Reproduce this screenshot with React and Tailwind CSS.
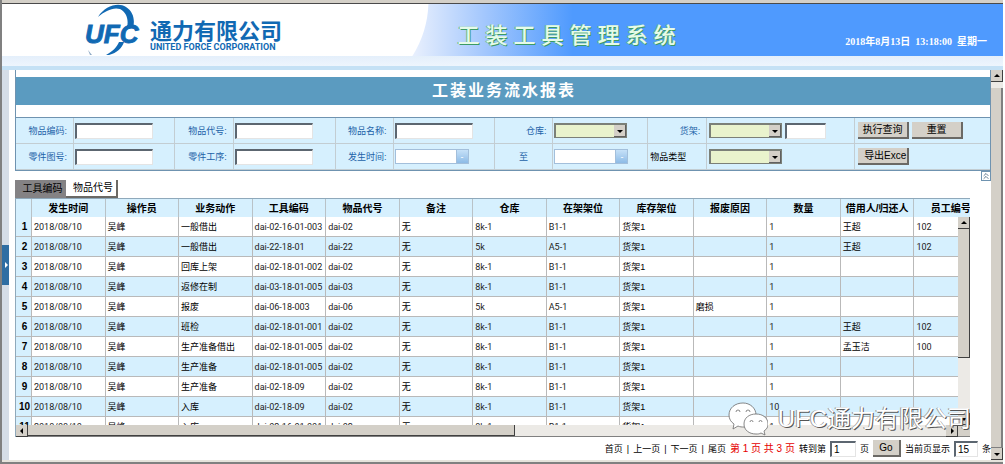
import { ChevronsUp } from 'lucide-react';
import clsx from 'clsx';

const columns = [
  '发生时间', '操作员', '业务动作', '工具编码', '物品代号', '备注', '仓库',
  '在架架位', '库存架位', '报废原因', '数量', '借用人/归还人', '员工编号',
];

const rows = [
  ['2018/08/10', '吴峰', '一般借出', 'dai-02-16-01-003', 'dai-02', '无', '8k-1', 'B1-1', '货架1', '', '1', '王超', '102'],
  ['2018/08/10', '吴峰', '一般借出', 'dai-22-18-01', 'dai-22', '无', '5k', 'A5-1', '货架1', '', '1', '王超', '102'],
  ['2018/08/10', '吴峰', '回库上架', 'dai-02-18-01-002', 'dai-02', '无', '8k-1', 'B1-1', '货架1', '', '1', '', ''],
  ['2018/08/10', '吴峰', '返修在制', 'dai-03-18-01-005', 'dai-03', '无', '8k-1', 'B1-1', '货架1', '', '1', '', ''],
  ['2018/08/10', '吴峰', '报废', 'dai-06-18-003', 'dai-06', '无', '5k', 'A5-1', '货架1', '磨损', '1', '', ''],
  ['2018/08/10', '吴峰', '班检', 'dai-02-18-01-001', 'dai-02', '无', '8k-1', 'B1-1', '货架1', '', '1', '王超', '102'],
  ['2018/08/10', '吴峰', '生产准备借出', 'dai-02-18-01-005', 'dai-02', '无', '8k-1', 'B1-1', '货架1', '', '1', '孟玉洁', '100'],
  ['2018/08/10', '吴峰', '生产准备', 'dai-02-18-01-005', 'dai-02', '无', '8k-1', 'B1-1', '货架1', '', '1', '', ''],
  ['2018/08/10', '吴峰', '生产准备', 'dai-02-18-09', 'dai-02', '无', '8k-1', 'B1-1', '货架1', '', '1', '', ''],
  ['2018/08/10', '吴峰', '入库', 'dai-02-18-09', 'dai-02', '无', '8k-1', 'B1-1', '货架1', '', '10', '', ''],
  ['2018/08/10', '吴峰', '入库', 'dai-02-16-01-001', 'dai-02', '无', '8k-1', 'B1-1', '货架1', '', '1', '', ''],
];

// columns whose values are Chinese words
const wordColumns = [1, 2, 5, 8, 9, 11];

const arrows = {
  up: '2,6 5,3 8,6',
  down: '2,4 5,7 8,4',
  left: '6,2 3,5 6,8',
  right: '4,2 7,5 4,8',
};

const Arrow = ({ dir, className = 'fill-black' }) => (
  <svg viewBox="0 0 10 10" className={clsx('h-2.5 w-2.5 shrink-0', className)} aria-hidden="true">
    <polygon points={arrows[dir]} />
  </svg>
);

const ScrollButton = ({ dir, label }) => (
  <button
    type="button"
    aria-label={label}
    className="flex h-3 w-3 shrink-0 items-center justify-center border-r border-b border-[#404040] bg-[#d4d0c8]"
  >
    <Arrow dir={dir} />
  </button>
);

const Logo = () => (
  <div className="flex items-start gap-1.5">
    <svg viewBox="0 0 60 52" className="h-[52px] w-[60px] fill-[#1169b3]" role="img" aria-label="UFC">
      <path d="M14 13 C21 2 34 -2 42 3 C50 8 51 17 49 24 L43 23 C45 15 42 8 36 5 C29 3 21 7 14 13 Z" />
      <path d="M40 38 C38 44 33 49 25 51 L22 51 C29 47 33 43 35 38 Z" />
      <path d="M4 46 L8 51 L6 51 Z" className="fill-[#8fa9c4]" />
      <text
        x="1"
        y="39"
        fontSize="26"
        stroke="#1169b3"
        strokeWidth="0.9"
        className="font-['Liberation_Sans',sans-serif] font-bold italic"
      >
        UFC
      </text>
    </svg>
    <div className="pt-[18px] text-[#1169b3]">
      <div className="text-[22px] leading-5 font-bold">通力有限公司</div>
      <div className="font-[Roboto,sans-serif] text-[9px] leading-2.5 font-bold whitespace-nowrap">UNITED FORCE CORPORATION</div>
    </div>
  </div>
);

const Header = () => (
  <header className="shrink-0">
    <div className="relative flex h-[52px] overflow-hidden bg-white">
      <svg viewBox="0 0 1000 52" preserveAspectRatio="none" className="absolute inset-0 h-full w-full" aria-hidden="true">
        <defs>
          <linearGradient id="sky" gradientUnits="userSpaceOnUse" x1="410" y1="0" x2="570" y2="0">
            <stop offset="0" stopColor="#e9f0fd" />
            <stop offset="0.45" stopColor="#a3c7fd" />
            <stop offset="1" stopColor="#4f9afe" />
          </linearGradient>
        </defs>
        <path d="M426 0 Q425 28 410 52 L1000 52 L1000 0 Z" fill="url(#sky)" />
      </svg>
      <div className="relative flex flex-[6] justify-start pl-[82px]">
        <Logo />
      </div>
      <h1 className="relative flex items-center gap-1.5 pt-3 font-['Liberation_Serif','Noto_Sans_CJK_SC',serif] text-[22px] leading-6 font-medium text-[#e6fbe9] [text-shadow:1px_1px_0_#3b9a66,-1px_0_0_#6db98c]">
        {[...'工装工具管理系统'].map((char, i) => (
          <span key={i}>{char}</span>
        ))}
      </h1>
      <div className="relative flex flex-[5] items-end justify-end pr-4 pb-1.5">
        <time className="font-['Liberation_Serif','Noto_Sans_CJK_SC',serif] text-[10px] leading-4 font-bold whitespace-pre text-white">
          2018年8月13日  13:18:00  星期一
        </time>
      </div>
    </div>
    <div className="h-2.5 bg-gradient-to-b from-[#e4effb] to-[#eef5fd]"></div>
    <div className="h-1 bg-[#c5e1f5]"></div>
  </header>
);

const Cell = ({ children, className }) => (
  <div className={clsx('flex h-[26px] items-center border-r border-b border-[#c3cdd2]', className)}>{children}</div>
);

const Label = ({ htmlFor, children, className = 'justify-end pr-1.5 text-[#1c62a8]' }) => (
  <Cell className={className}>
    <label htmlFor={htmlFor} className="whitespace-nowrap">{children}</label>
  </Cell>
);

const inputStyle = 'h-4 border-t-2 border-l-2 border-t-[#5c6670] border-l-[#5c6670] border-r border-b border-r-[#e4e4e4] border-b-[#e4e4e4] bg-white px-0.5 outline-none';

const TextField = ({ id, label }) => (
  <>
    <Label htmlFor={id}>{label}</Label>
    <Cell className="pl-px">
      <input id={id} type="text" className={clsx(inputStyle, 'w-[78px]')} />
    </Cell>
  </>
);

const Dropdown = ({ id }) => (
  <div className="relative">
    <select
      id={id}
      className="block h-[15px] w-[73px] appearance-none border-t-2 border-l-2 border-r border-b border-[#7b8078] bg-[#e9f3cd] outline-none"
    >
      <option value=""></option>
    </select>
    <span className="pointer-events-none absolute top-0.5 right-px flex h-3 w-3 items-center justify-center border-r border-b border-[#606060] bg-[#d4d0c8]">
      <Arrow dir="down" />
    </span>
  </div>
);

const DateField = ({ id, label }) => (
  <div className="flex h-[15px] border border-[#a3bfdb]">
    <input id={id} type="text" className="w-[60px] bg-white px-0.5 outline-none" />
    <button
      type="button"
      aria-label={label}
      className="flex w-3 items-center justify-center border-l border-[#a3bfdb] bg-gradient-to-b from-[#c6e1f8] to-[#8dbbe6] leading-3 text-white"
    >
      -
    </button>
  </div>
);

const GreyButton = ({ children, className }) => (
  <button
    type="button"
    className={clsx('h-[17px] overflow-hidden border-r-2 border-b-2 border-[#6b6965] bg-[#d4d0c8] text-[10px] leading-4 whitespace-nowrap text-black', className)}
  >
    {children}
  </button>
);

const SearchForm = () => (
  <form className="grid grid-cols-[58fr_101fr_59fr_102fr_58fr_101fr_59fr_95fr_59fr_148fr_135fr] border-y border-[#6f93b0] bg-[#d6f0fe]">
    <TextField id="item-code" label="物品编码:" />
    <TextField id="item-no" label="物品代号:" />
    <TextField id="item-name" label="物品名称:" />
    <Label htmlFor="warehouse">仓库:</Label>
    <Cell className="pl-px"><Dropdown id="warehouse" /></Cell>
    <Label htmlFor="shelf">货架:</Label>
    <Cell className="gap-[3px] pl-0.5">
      <Dropdown id="shelf" />
      <input type="text" aria-label="货架" className={clsx(inputStyle, 'w-[41px]')} />
    </Cell>
    <Cell className="gap-[3px] border-r-0 pl-[3px]">
      <GreyButton className="w-[51px]">执行查询</GreyButton>
      <GreyButton className="w-[51px]">重置</GreyButton>
    </Cell>

    <TextField id="part-no" label="零件图号:" />
    <TextField id="part-step" label="零件工序:" />
    <Label htmlFor="date-from">发生时间:</Label>
    <Cell className="pl-px"><DateField id="date-from" label="开始日期" /></Cell>
    <Label htmlFor="date-to" className="justify-center text-[#1c62a8]">至</Label>
    <Cell className="pl-px"><DateField id="date-to" label="结束日期" /></Cell>
    <Label htmlFor="item-type" className="pl-0.5 text-black">物品类型</Label>
    <Cell className="pl-0.5"><Dropdown id="item-type" /></Cell>
    <Cell className="border-r-0 pl-[3px]">
      <GreyButton className="w-[51px] pl-1.5 text-left">导出Exce</GreyButton>
    </Cell>
  </form>
);

const RecordTable = () => (
  <div className="flex min-h-0 flex-1 flex-col border-t border-l border-[#8fa9bb]">
    <div className="relative min-h-0 flex-1 overflow-hidden">
      <table className="w-full min-w-[972px] table-fixed border-separate border-spacing-0">
        <thead>
          <tr className="h-[18px] bg-[#d6f0fe] text-[10px] leading-4">
            <th className="w-4 border-r border-[#b9c2c7]"></th>
            {columns.map((name) => (
              <th key={name} className="border-r border-[#b9c2c7] p-0 pt-0.5 whitespace-nowrap">{name}</th>
            ))}
          </tr>
        </thead>
        <tbody>
          {rows.map((row, i) => (
            <tr key={i} className={clsx('h-5', i % 2 ? 'bg-[#d6f0fe]' : 'bg-white')}>
              <th className="border-r border-b border-[#b9b9b9] bg-[#d6f0fe] p-0 pl-0.5 text-center font-['Liberation_Sans',sans-serif] text-[10px] leading-4">
                {i + 1}
              </th>
              {row.map((value, j) => (
                <td
                  key={j}
                  className={clsx(
                    'border-r border-b border-[#b9b9b9] p-0 pl-0.5 text-[9px] leading-4 whitespace-nowrap',
                    wordColumns.includes(j) ? 'text-black' : 'font-[Roboto,sans-serif] text-[#222222]'
                  )}
                >
                  {value}
                </td>
              ))}
            </tr>
          ))}
        </tbody>
      </table>

      {/* vertical scrollbar, sits over the last column */}
      <div className="absolute top-[18px] right-0 bottom-0 flex w-3 flex-col bg-[#eceae6]">
        <ScrollButton dir="up" label="向上滚动" />
        <div className="h-[62%] border-r border-b border-[#404040] bg-[#d4d0c8]"></div>
        <div className="flex-1"></div>
        <ScrollButton dir="down" label="向下滚动" />
      </div>
    </div>
    <div className="flex h-3 shrink-0 border-b border-[#808080] bg-[#eceae6]">
      <ScrollButton dir="left" label="向左滚动" />
      <div className="w-[51%] border-r border-b border-[#404040] bg-[#d4d0c8]"></div>
      <div className="flex-1"></div>
      <ScrollButton dir="right" label="向右滚动" />
      <div className="w-3 bg-[#d4d0c8]"></div>
    </div>
  </div>
);

const Pagination = () => (
  <nav className="flex h-[23px] shrink-0 items-center justify-end gap-1 text-[9px] whitespace-nowrap text-black">
    <a href="#first">首页</a>|
    <a href="#prev">上一页</a>|
    <a href="#next">下一页</a>|
    <a href="#last">尾页</a>
    <span className="text-[10px] text-[#e60000]">第 1 页 共 3 页</span>
    <label htmlFor="page-no">转到第</label>
    <input id="page-no" type="text" defaultValue="1" className={clsx(inputStyle, 'w-[26px] text-[10px]')} />
    页
    <GreyButton className="w-7">Go</GreyButton>
    <label htmlFor="page-size">当前页显示</label>
    <input id="page-size" type="text" defaultValue="15" className={clsx(inputStyle, 'w-6 text-[10px]')} />
    条
  </nav>
);

const Watermark = () => (
  <div className="pointer-events-none absolute right-5 bottom-6 flex items-center gap-2.5">
    <svg viewBox="0 0 40 34" className="h-[34px] w-10" fill="#ffffff" stroke="#6b6b6b" strokeWidth="0.8" aria-hidden="true">
      <path d="M15 1 C7 1 1 6 1 13 C1 17 3 20 6 22 L5 27 L10 24 C12 25 14 25 16 25 C23 25 28 20 28 13 C28 6 22 1 15 1 Z" />
      <path d="M28 12 C21 12 16 16 16 22 C16 28 21 32 28 32 C30 32 31 32 33 31 L37 33 L36 29 C39 27 40 25 40 22 C40 16 35 12 28 12 Z" />
      <path d="M8 10 a2 2 0 0 1 4 0 M18 10 a2 2 0 0 1 4 0 M22 20 a1.500 1.500 0 0 1 3 0 M31 20 a1.500 1.500 0 0 1 3 0" fill="none" />
    </svg>
    <span className="text-2xl leading-7 font-normal whitespace-nowrap text-white [text-shadow:1px_1px_0_#555555,-1px_0_0_#999999]">
      UFC通力有限公司
    </span>
  </div>
);

const App = () => {
  return (
    <div className="flex h-screen min-h-[464px] flex-col overflow-hidden border-l-2 border-[#808080] bg-white pr-0.5 font-['Liberation_Sans','Noto_Sans_CJK_SC',sans-serif] text-[9px] leading-3 text-black">
      <div className="h-[3px] shrink-0 bg-[#d4d0c8]"></div>
      <div className="h-px shrink-0 bg-[#4a4a4a]"></div>
      <Header />

      <div className="flex min-h-0 flex-1">
        <aside className="flex w-[7px] shrink-0 flex-col justify-center bg-[#d5dde7]">
          <button type="button" aria-label="展开菜单" className="flex h-10 items-center justify-center bg-[#2f6ea3]">
            <Arrow dir="right" className="fill-white" />
          </button>
        </aside>

        <main className="relative ml-1.5 flex min-w-0 flex-1 flex-col">
          <section className="shrink-0 border-x border-[#6f93b0] pt-[7px]">
            <h2 className="flex h-7 items-center justify-center gap-0.5 bg-[#5b9bc0] font-['Liberation_Serif','Noto_Sans_CJK_SC',serif] text-base leading-6 font-bold text-white">
              {[...'工装业务流水报表'].map((char, i) => (
                <span key={i}>{char}</span>
              ))}
            </h2>
            <div className="h-3"></div>
            <SearchForm />
          </section>

          <div className="flex h-[27px] shrink-0 items-end justify-between">
            <div className="flex text-[10px]">
              <button type="button" className="h-[18px] w-[51px] bg-[#848284] pl-1 text-black">工具编码</button>
              <button type="button" className="h-[18px] w-[52px] border-r-2 border-b-2 border-[#6b6965] bg-white pl-1 text-black">物品代号</button>
            </div>
            <button type="button" aria-label="收起" className="flex h-2.5 w-2.5 items-center justify-center self-start border border-[#6f93b0]">
              <ChevronsUp className="h-2.5 w-2.5 shrink-0 text-[#44617a]" />
            </button>
          </div>

          <div className="flex min-h-0 flex-1 flex-col pr-[21px]">
            <RecordTable />
          </div>
          <Pagination />
          <Watermark />
        </main>

        {/* page scrollbar */}
        <div className="flex w-3 shrink-0 flex-col bg-[#eceae6]">
          <ScrollButton dir="up" label="页面向上" />
          <div className="h-1.5"></div>
          <div className="flex-1 border-r-2 border-b border-[#808080] bg-[#d4d0c8]"></div>
          <ScrollButton dir="down" label="页面向下" />
        </div>
      </div>

      <div className="h-1 shrink-0 border-b-2 border-[#808080] bg-[#e6e3dc]"></div>
    </div>
  );
};

export default App;
